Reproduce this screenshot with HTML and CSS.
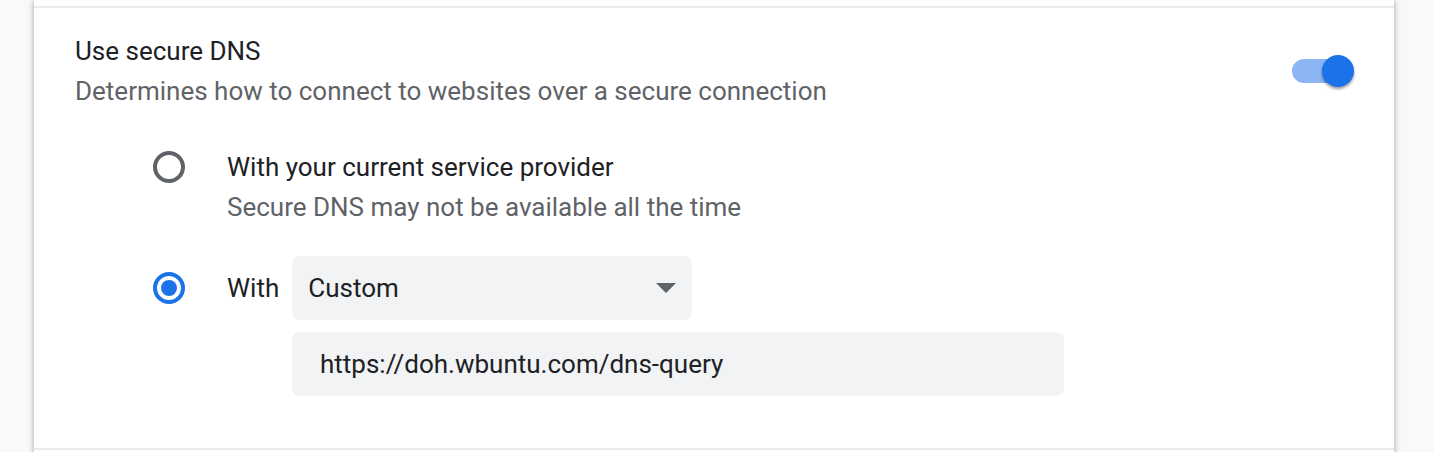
FILE: index.html
```html
<!DOCTYPE html>
<html>
<head>
<meta charset="utf-8">
<link rel="stylesheet" href="styles.css">
</head>
<body>
<div class="card">
  <div class="prev-row"></div>
  <div class="row">
    <div class="header">
      <div class="header-text">
        <div class="title">Use secure DNS</div>
        <div class="secondary">Determines how to connect to websites over a secure connection</div>
      </div>
      <div class="toggle"><div class="bar"></div><div class="knob"></div></div>
    </div>
    <div class="options">
      <div class="option first">
        <div class="radio"></div>
        <div class="option-text">
          <div class="label">With your current service provider</div>
          <div class="secondary">Secure DNS may not be available all the time</div>
        </div>
      </div>
      <div class="option second">
        <div class="radio checked"><div class="dot"></div></div>
        <div class="custom">
          <div class="custom-line">
            <span class="label">With</span>
            <div class="select">
              <span>Custom</span>
              <svg class="arrow" width="20" height="10" viewBox="0 0 20 10"><path d="M0 0 L20 0 L10 10 Z" fill="#5f6368"/></svg>
            </div>
          </div>
          <div class="input">https://doh.wbuntu.com/dns-query</div>
        </div>
      </div>
    </div>
  </div>
  <div class="next-row"></div>
</div>
</body>
</html>
```

FILE: styles.css
```css
html, body {
  margin: 0;
  padding: 0;
}
body {
  background: #f8f9fa;
  font-family: Roboto, "Noto Sans", sans-serif;
  width: 1434px;
  height: 452px;
  overflow: hidden;
}
.card {
  margin-left: 34px;
  width: 1360px;
  background: #fff;
  box-shadow: 0 2px 4px 0 rgba(60, 64, 67, 0.3), 0 2px 6px 2px rgba(60, 64, 67, 0.15);
}
.prev-row {
  height: 6px;
  border-bottom: 2px solid #e8eaed;
}
.row {
  padding: 23px 40px 0 41px;
  height: 440px;
  box-sizing: border-box;
}
.header {
  display: flex;
  align-items: center;
  justify-content: space-between;
}
.title, .label {
  font-size: 26px;
  line-height: 40px;
  color: #202124;
}
.secondary {
  font-size: 26px;
  line-height: 40px;
  color: #5f6368;
}
.toggle {
  position: relative;
  width: 62px;
  height: 32px;
}
.bar {
  position: absolute;
  left: 0;
  top: 4px;
  width: 48px;
  height: 24px;
  border-radius: 12px;
  background: #8cb5f4;
}
.knob {
  position: absolute;
  right: 0;
  top: 0;
  width: 32px;
  height: 32px;
  border-radius: 50%;
  background: #1a73e8;
  box-shadow: 0 2px 3px rgba(0, 0, 0, 0.4);
}
.options {
  padding-left: 78px;
}
.option {
  display: flex;
  align-items: flex-start;
}
.option.first {
  margin-top: 36px;
}
.option.second {
  margin-top: 29px;
}
.radio {
  width: 32px;
  height: 32px;
  box-sizing: border-box;
  border: 4px solid #5f6368;
  border-radius: 50%;
  margin-top: 4px;
  margin-right: 42px;
  flex: none;
  display: flex;
  align-items: center;
  justify-content: center;
}
.option.second .radio {
  margin-top: 16px;
}
.radio.checked {
  border-color: #1a73e8;
}
.dot {
  width: 16px;
  height: 16px;
  border-radius: 50%;
  background: #1a73e8;
}
.custom-line {
  display: flex;
  align-items: center;
  gap: 13px;
}
.select {
  width: 400px;
  height: 64px;
  box-sizing: border-box;
  padding: 0 16px;
  background: #f1f3f4;
  border-radius: 8px;
  display: flex;
  align-items: center;
  justify-content: space-between;
  font-size: 26px;
  color: #202124;
}
.arrow {
  display: block;
}
.input {
  margin-top: 12px;
  margin-left: 65px;
  width: 772px;
  height: 64px;
  box-sizing: border-box;
  padding-left: 28px;
  background: #f1f3f4;
  border-radius: 8px;
  display: flex;
  align-items: center;
  font-size: 26px;
  color: #202124;
}
.next-row {
  border-top: 2px solid #e8eaed;
  height: 2px;
}
```
